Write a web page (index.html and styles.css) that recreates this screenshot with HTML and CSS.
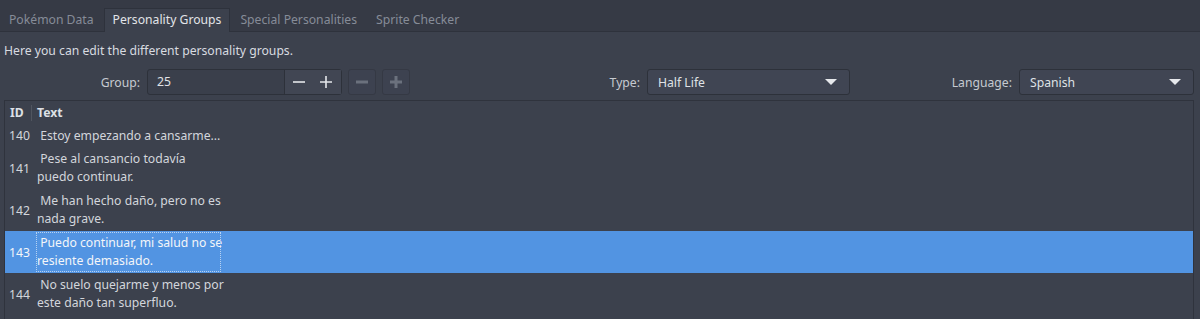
FILE: index.html
```html
<!DOCTYPE html>
<html lang="en">
<head>
  <meta charset="UTF-8">
  <title>Personality Groups</title>
  <link rel="stylesheet" href="styles.css">
</head>
<body>
  <div class="tabbar">
    <div class="tab">Pokémon Data</div>
    <div class="tab active">Personality Groups</div>
    <div class="tab">Special Personalities</div>
    <div class="tab">Sprite Checker</div>
  </div>
  <div class="pane">
    <p class="intro">Here you can edit the different personality groups.</p>
    <div class="controls">
      <div class="field group-field">
        <span class="label">Group:</span>
        <div class="spinbox">
          <span class="spin-value">25</span>
          <div class="spin-buttons">
            <svg width="14" height="14" viewBox="0 0 14 14"><path d="M1 7h12" stroke="#e4e6ea" stroke-width="1.6"/></svg>
            <svg width="14" height="14" viewBox="0 0 14 14"><path d="M1 7h12M7 1v12" stroke="#e4e6ea" stroke-width="1.6"/></svg>
          </div>
        </div>
        <button class="tool-btn"><svg width="14" height="14" viewBox="0 0 14 14"><path d="M1 7h12" stroke="#6b717d" stroke-width="3"/></svg></button>
        <button class="tool-btn"><svg width="14" height="14" viewBox="0 0 14 14"><path d="M1 7h12M7 1v12" stroke="#6b717d" stroke-width="3"/></svg></button>
      </div>
      <div class="field type-field">
        <span class="label">Type:</span>
        <div class="combo type-combo"><span>Half Life</span><span class="arrow"></span></div>
      </div>
      <div class="field lang-field">
        <span class="label">Language:</span>
        <div class="combo lang-combo"><span>Spanish</span><span class="arrow"></span></div>
      </div>
    </div>
    <div class="table">
      <div class="row head">
        <div class="cell id">ID</div>
        <div class="cell text">Text</div>
      </div>
      <div class="row single">
        <div class="cell id">140</div>
        <div class="cell text">&nbsp;Estoy empezando a cansarme...</div>
      </div>
      <div class="row">
        <div class="cell id">141</div>
        <div class="cell text">&nbsp;Pese al cansancio todavía<br>puedo continuar.</div>
      </div>
      <div class="row">
        <div class="cell id">142</div>
        <div class="cell text">&nbsp;Me han hecho daño, pero no es<br>nada grave.</div>
      </div>
      <div class="row selected">
        <div class="cell id">143</div>
        <div class="cell text focus">&nbsp;Puedo continuar, mi salud no se<br>resiente demasiado.</div>
      </div>
      <div class="row">
        <div class="cell id">144</div>
        <div class="cell text">&nbsp;No suelo quejarme y menos por<br>este daño tan superfluo.</div>
      </div>
    </div>
  </div>
</body>
</html>
```

FILE: styles.css
```css
body {
  margin: 0;
  background-color: #363a45;
  color: #d3d6dc;
  font-family: "Noto Sans", "Open Sans", sans-serif;
  font-size: 12.2px;
  height: 319px;
  overflow: hidden;
}
.tabbar {
  display: flex;
  align-items: flex-end;
  height: 31px;
}
.tab {
  height: 22px;
  line-height: 21px;
  padding: 0 8px;
  margin-right: 1px;
  color: #868c98;
  border: 1px solid transparent;
  border-bottom: none;
}
.tab.active {
  color: #e2e4e8;
  background-color: #3c414d;
  border-color: #2e323c;
  height: 23px;
  margin-bottom: -1px;
  position: relative;
}
.pane {
  background-color: #3c414d;
  border-top: 1px solid #2e323c;
  height: 300px;
  padding: 0 6px 0 4px;
}
.intro {
  margin: 0;
  padding-top: 10px;
  height: 27px;
  color: #d8dbe0;
}
.controls {
  display: flex;
  align-items: center;
  height: 26px;
}
.field {
  display: flex;
  align-items: center;
  justify-content: flex-end;
  flex-shrink: 0;
}
.label {
  color: #c6cad1;
  margin-right: 7px;
}
.group-field {
  width: 406px;
}
.type-field {
  width: 440px;
}
.lang-field {
  width: 344px;
}
.spinbox {
  display: flex;
  width: 195px;
  height: 26px;
  border: 1px solid #2d313a;
  border-radius: 3px;
  box-sizing: border-box;
  background-color: #3a3f4b;
}
.spin-value {
  flex: 1;
  padding-left: 9px;
  line-height: 24px;
  color: #e0e2e6;
  border-right: 1px solid #2d313a;
}
.spin-buttons {
  display: flex;
  align-items: center;
  gap: 13px;
  width: 56px;
  box-sizing: border-box;
  padding: 0 0 0 7px;
  background-color: #414653;
}
.tool-btn {
  width: 28px;
  height: 26px;
  margin-left: 6px;
  padding: 0;
  border: 1px solid #353944;
  border-radius: 3px;
  background-color: #3d4250;
  display: flex;
  align-items: center;
  justify-content: center;
}
.combo {
  display: flex;
  align-items: center;
  justify-content: space-between;
  height: 26px;
  box-sizing: border-box;
  padding: 0 12px 0 10px;
  border: 1px solid #2d313a;
  border-radius: 3px;
  background-color: #404553;
  color: #dfe2e6;
}
.type-combo {
  width: 203px;
}
.lang-combo {
  width: 175px;
}
.arrow {
  width: 0;
  height: 0;
  border-left: 6px solid transparent;
  border-right: 6px solid transparent;
  border-top: 6px solid #e6e8ec;
}
.table {
  margin-top: 5px;
  border: 1px solid #2f333d;
  height: 230px;
  box-sizing: border-box;
}
.row {
  display: flex;
  align-items: center;
  height: 42px;
  white-space: nowrap;
}
.row.head {
  height: 23px;
  font-weight: bold;
  color: #dde0e5;
}
.row.single {
  height: 23px;
}
.cell.id {
  width: 27px;
  padding-left: 4px;
  flex-shrink: 0;
}
.head .cell.id {
  padding-left: 5px;
  width: 21px;
  border-right: 1px solid #50555f;
  height: 16px;
  line-height: 16px;
}
.cell.text {
  width: 184px;
  padding-left: 1px;
  line-height: 18px;
}
.head .cell.text {
  padding-left: 5px;
}
.row.selected {
  background-color: #5294e2;
  color: #f4f6f9;
}
.cell.focus {
  outline: 1px dotted #b7d2f2;
  outline-offset: -1px;
  padding: 2px 0 2px 1px;
}
```
